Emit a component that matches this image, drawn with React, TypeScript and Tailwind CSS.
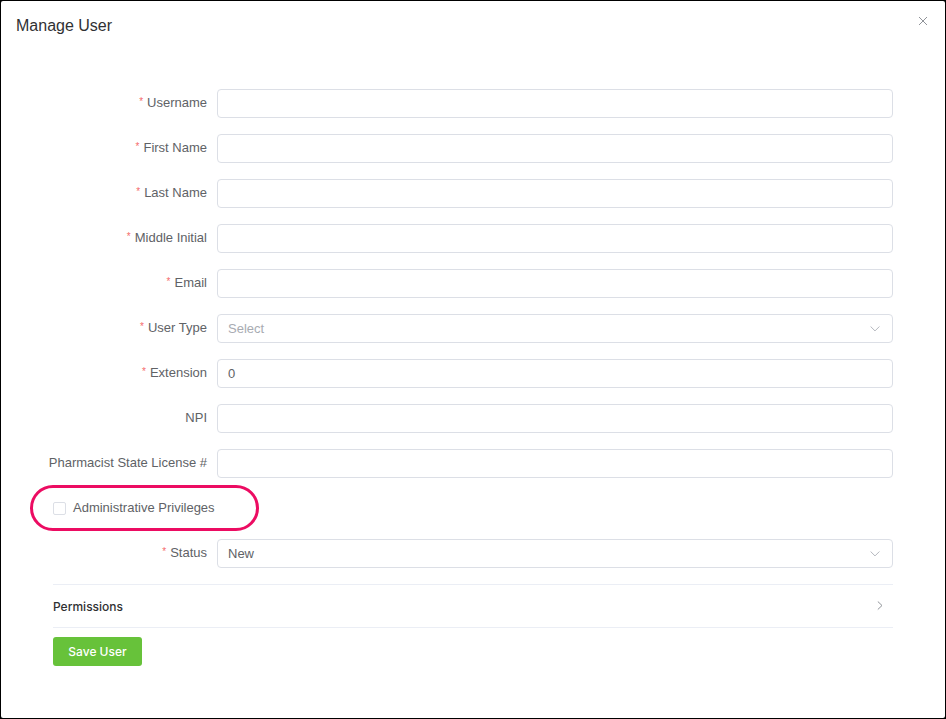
import { useState } from "react";
import type { ReactNode } from "react";

const labelClass = "flex w-[164px] shrink-0 justify-end whitespace-nowrap pr-[10px] leading-[28px]";
const controlClass =
  "block h-[29px] w-full rounded border border-[#dcdfe6] bg-white px-[10px] text-[13px] text-[#606266] outline-none focus:border-[#409eff]";

function Row({ id, label, required, children }: { id: string; label: string; required?: boolean; children: ReactNode }) {
  return (
    <div className="flex h-[29px]">
      <label htmlFor={id} className={labelClass}>
        {required && <span className="mr-1 text-[10px] leading-[26px] text-[#f56c6c]">*</span>}
        {label}
      </label>
      <div className="min-w-0 flex-1">{children}</div>
    </div>
  );
}

function TextField({ id, label, required, value = "" }: { id: string; label: string; required?: boolean; value?: string }) {
  return (
    <Row id={id} label={label} required={required}>
      <input id={id} type="text" defaultValue={value} className={controlClass} />
    </Row>
  );
}

function SelectField({ id, label, options, placeholder }: { id: string; label: string; options: string[]; placeholder?: string }) {
  const [value, setValue] = useState(placeholder ? "" : options[0]);
  return (
    <Row id={id} label={label} required>
      <div className="relative">
        <select
          id={id}
          value={value}
          onChange={(e) => setValue(e.target.value)}
          className={`${controlClass} appearance-none pt-px ${value ? "" : "text-[#a8abb2]"}`}
        >
          {placeholder && <option value="">{placeholder}</option>}
          {options.map((o) => (
            <option key={o}>{o}</option>
          ))}
        </select>
        <svg
          viewBox="0 0 10 6"
          className="pointer-events-none absolute right-[13px] top-[12px] h-[6px] w-[10px]"
          fill="none"
          stroke="#b4b7be"
          aria-hidden="true"
        >
          <path d="M0.6 0.5 L5 4.9 L9.4 0.5" />
        </svg>
      </div>
    </Row>
  );
}

export default function App() {
  return (
    <div className="min-h-screen bg-black p-px font-['Liberation_Sans',Arial,sans-serif] text-[13px] text-[#606266]">
      <main className="min-h-[calc(100vh-2px)] rounded-[2px] bg-white pb-[52px]">
        <header className="flex items-start justify-between pl-[15px] pr-[17px] pt-[13px]">
          <h1 className="text-base text-[#303133]">Manage User</h1>
          <button type="button" aria-label="Close" className="mt-[2px] text-[#909399]">
            <svg viewBox="0 0 10 10" className="h-[10px] w-[10px]" fill="none" stroke="currentColor">
              <path d="M1 1 L9 9 M9 1 L1 9" />
            </svg>
          </button>
        </header>

        <form className="mt-[51px] px-[52px]" onSubmit={(e) => e.preventDefault()}>
          <div className="flex flex-col gap-4">
            <TextField id="username" label="Username" required />
            <TextField id="first-name" label="First Name" required />
            <TextField id="last-name" label="Last Name" required />
            <TextField id="middle-initial" label="Middle Initial" required />
            <TextField id="email" label="Email" required />
            <SelectField id="user-type" label="User Type" placeholder="Select" options={["Pharmacist", "Technician"]} />
            <TextField id="extension" label="Extension" required value="0" />
            <TextField id="npi" label="NPI" />
            <TextField id="license" label="Pharmacist State License #" />
            <div className="relative flex h-[29px] items-start">
              <label className="flex items-center gap-[7px] leading-[28px]">
                <input
                  type="checkbox"
                  className="h-[13px] w-[13px] appearance-none rounded-[2px] border border-[#dcdfe6] bg-white checked:bg-[#409eff]"
                />
                Administrative Privileges
              </label>
              <div className="pointer-events-none absolute -left-[23px] -top-[9px] h-[46px] w-[229px] rounded-full border-[3px] border-[#ec0c62]" />
            </div>
            <SelectField id="status" label="Status" options={["New", "Active", "Inactive"]} />
          </div>

          <button
            type="button"
            aria-expanded="false"
            className="mt-4 flex h-11 w-full items-center justify-between border-y border-[#ebeef5] pr-[10px] font-['Inter',sans-serif] text-xs font-medium text-[#303133]"
          >
            <span className="pt-[2px]">Permissions</span>
            <svg viewBox="0 0 6 10" className="h-[10px] w-[6px]" fill="none" stroke="#909399" aria-hidden="true">
              <path d="M0.8 0.5 L5 4.5 L0.8 8.5" />
            </svg>
          </button>

          <button
            type="submit"
            className="mt-[9px] block h-[29px] min-w-[89px] rounded-[3px] bg-[#67c23a] px-[15px] font-['Inter',sans-serif] text-xs font-medium text-white"
          >
            Save User
          </button>
        </form>
      </main>
    </div>
  );
}
